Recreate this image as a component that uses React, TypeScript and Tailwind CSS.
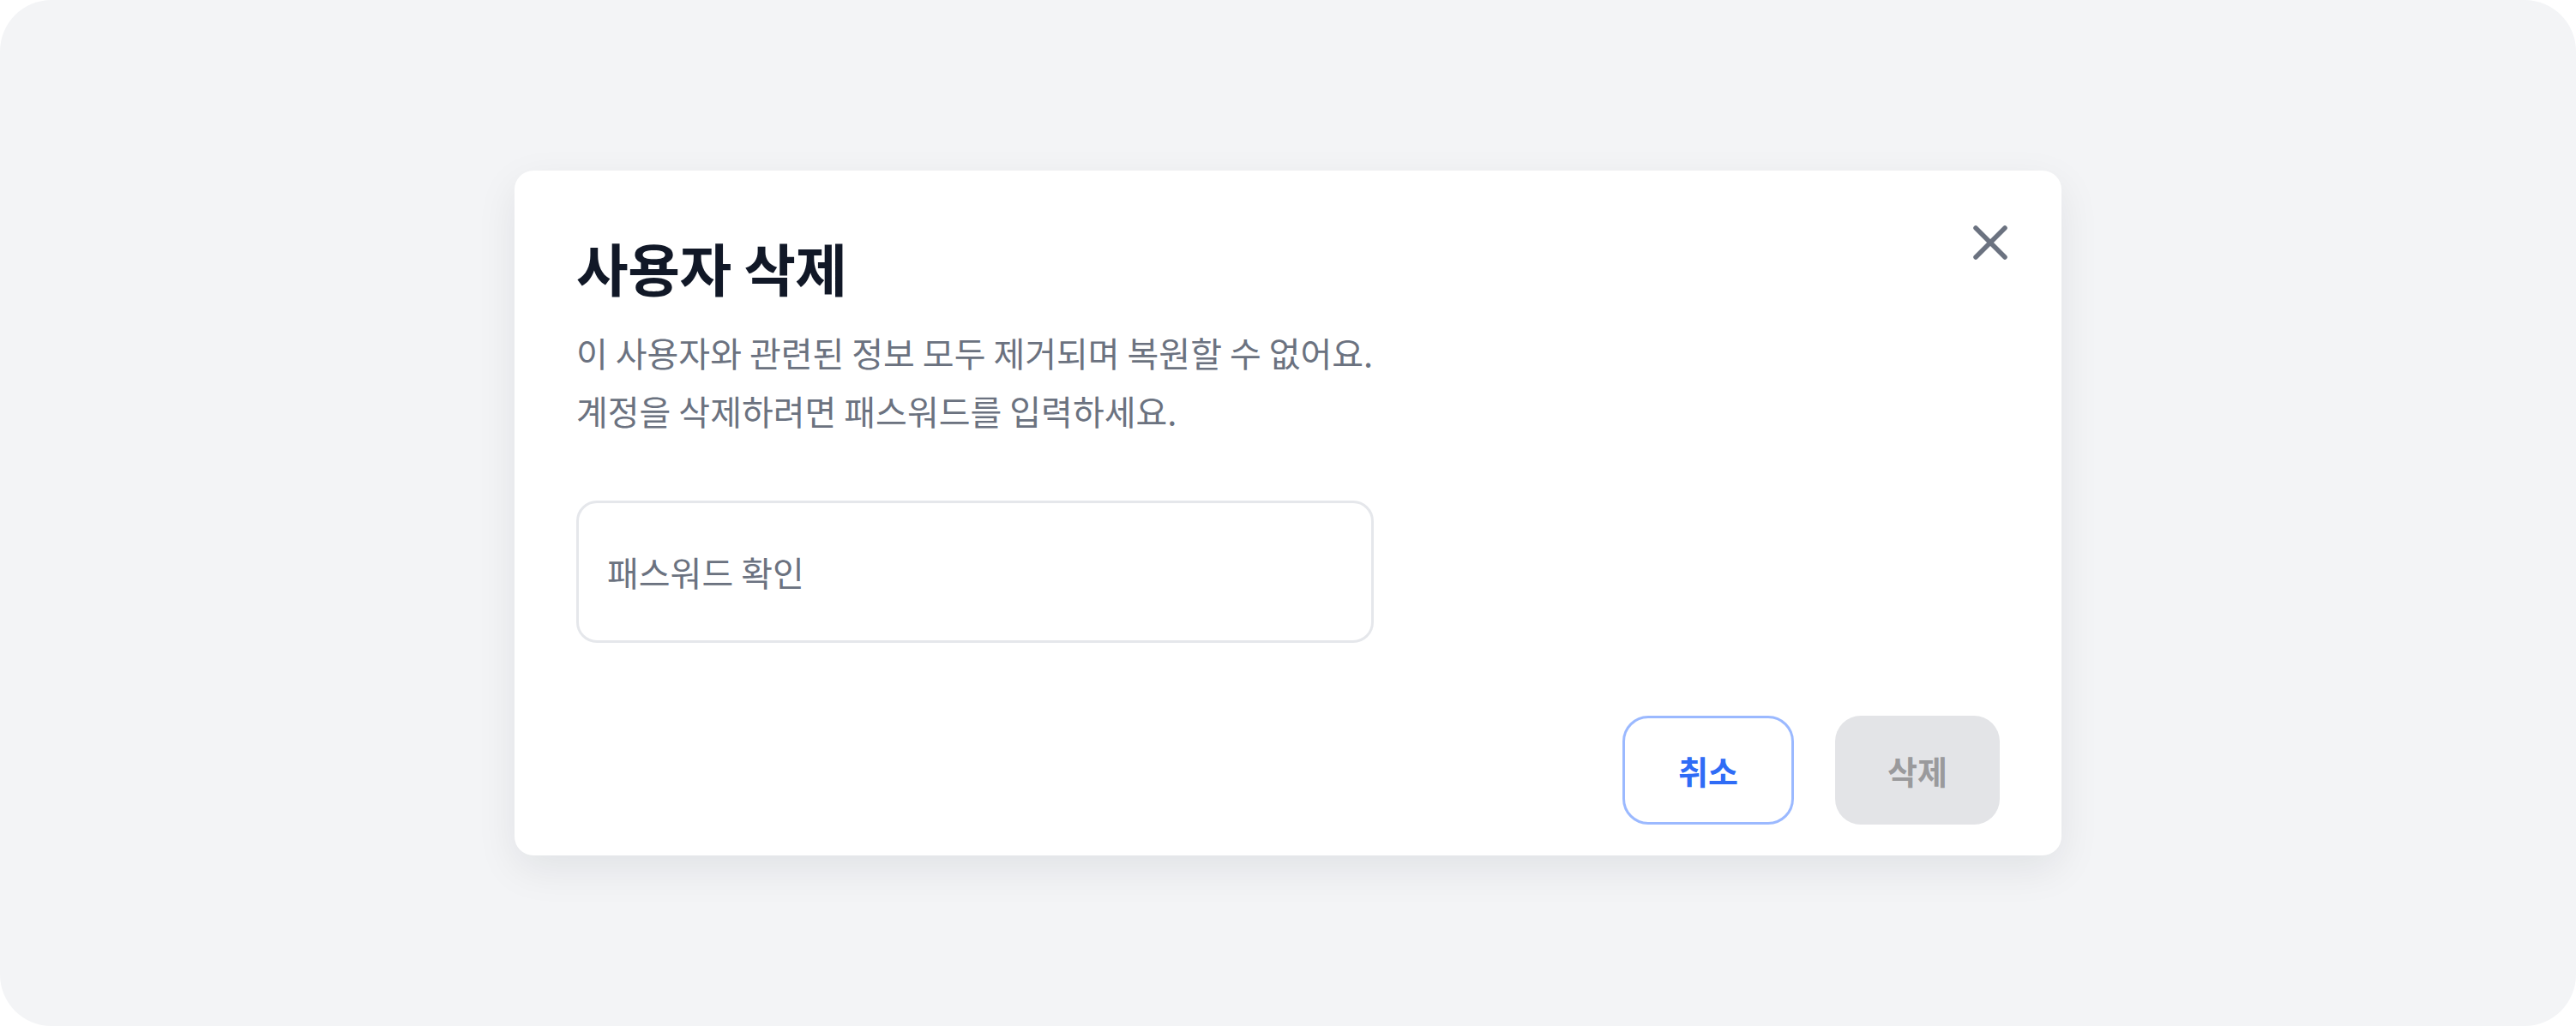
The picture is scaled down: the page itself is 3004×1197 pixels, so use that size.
const font = { fontFamily: '"Noto Sans CJK KR", "Noto Sans", sans-serif' }

function CloseIcon() {
  return (
    <svg width="40" height="40" viewBox="0 0 40 40" fill="none" aria-hidden>
      <path d="M3 3L37 37M37 3L3 37" stroke="#6b7280" strokeWidth="5.5" strokeLinecap="round" />
    </svg>
  )
}

export default function App() {
  return (
    <div className="min-h-screen w-full bg-white" style={font}>
      <div className="flex h-[1197px] w-full items-center justify-center rounded-[60px] bg-[#f3f4f6]">
        <div className="relative w-[1804px] rounded-[22px] bg-white px-[72px] pb-[36px] pt-[68px] shadow-[0_16px_48px_rgba(17,24,39,0.08)]">
          {/* Close */}
          <button className="absolute right-[63px] top-[64px] flex h-[40px] w-[40px] items-center justify-center">
            <CloseIcon />
          </button>

          <h2 className="text-[66px] font-bold leading-[88px] tracking-[-0.5px] text-[#111827]">사용자 삭제</h2>

          <p className="mt-[22px] text-[40px] leading-[68px] text-[#6b7280]">
            이 사용자와 관련된 정보 모두 제거되며 복원할 수 없어요.
            <br />
            계정을 삭제하려면 패스워드를 입력하세요.
          </p>

          <input
            type="password"
            placeholder="패스워드 확인"
            className="mt-[71px] block h-[166px] w-[930px] rounded-[24px] border-[3px] border-[#e5e7eb] bg-white px-[33px] text-[40px] text-[#111827] outline-none placeholder:text-[#6b7280]"
            style={font}
          />

          <div className="mt-[85px] flex justify-end gap-[48px]">
            <button className="h-[127px] w-[200px] rounded-[30px] border-[3px] border-[#9bb9ff] bg-white text-[38px] font-bold text-[#2f6cf6]">
              취소
            </button>
            <button className="h-[127px] w-[192px] rounded-[30px] bg-[#e3e4e7] text-[38px] font-bold text-[#9a9a9c]" disabled>
              삭제
            </button>
          </div>
        </div>
      </div>
    </div>
  )
}
